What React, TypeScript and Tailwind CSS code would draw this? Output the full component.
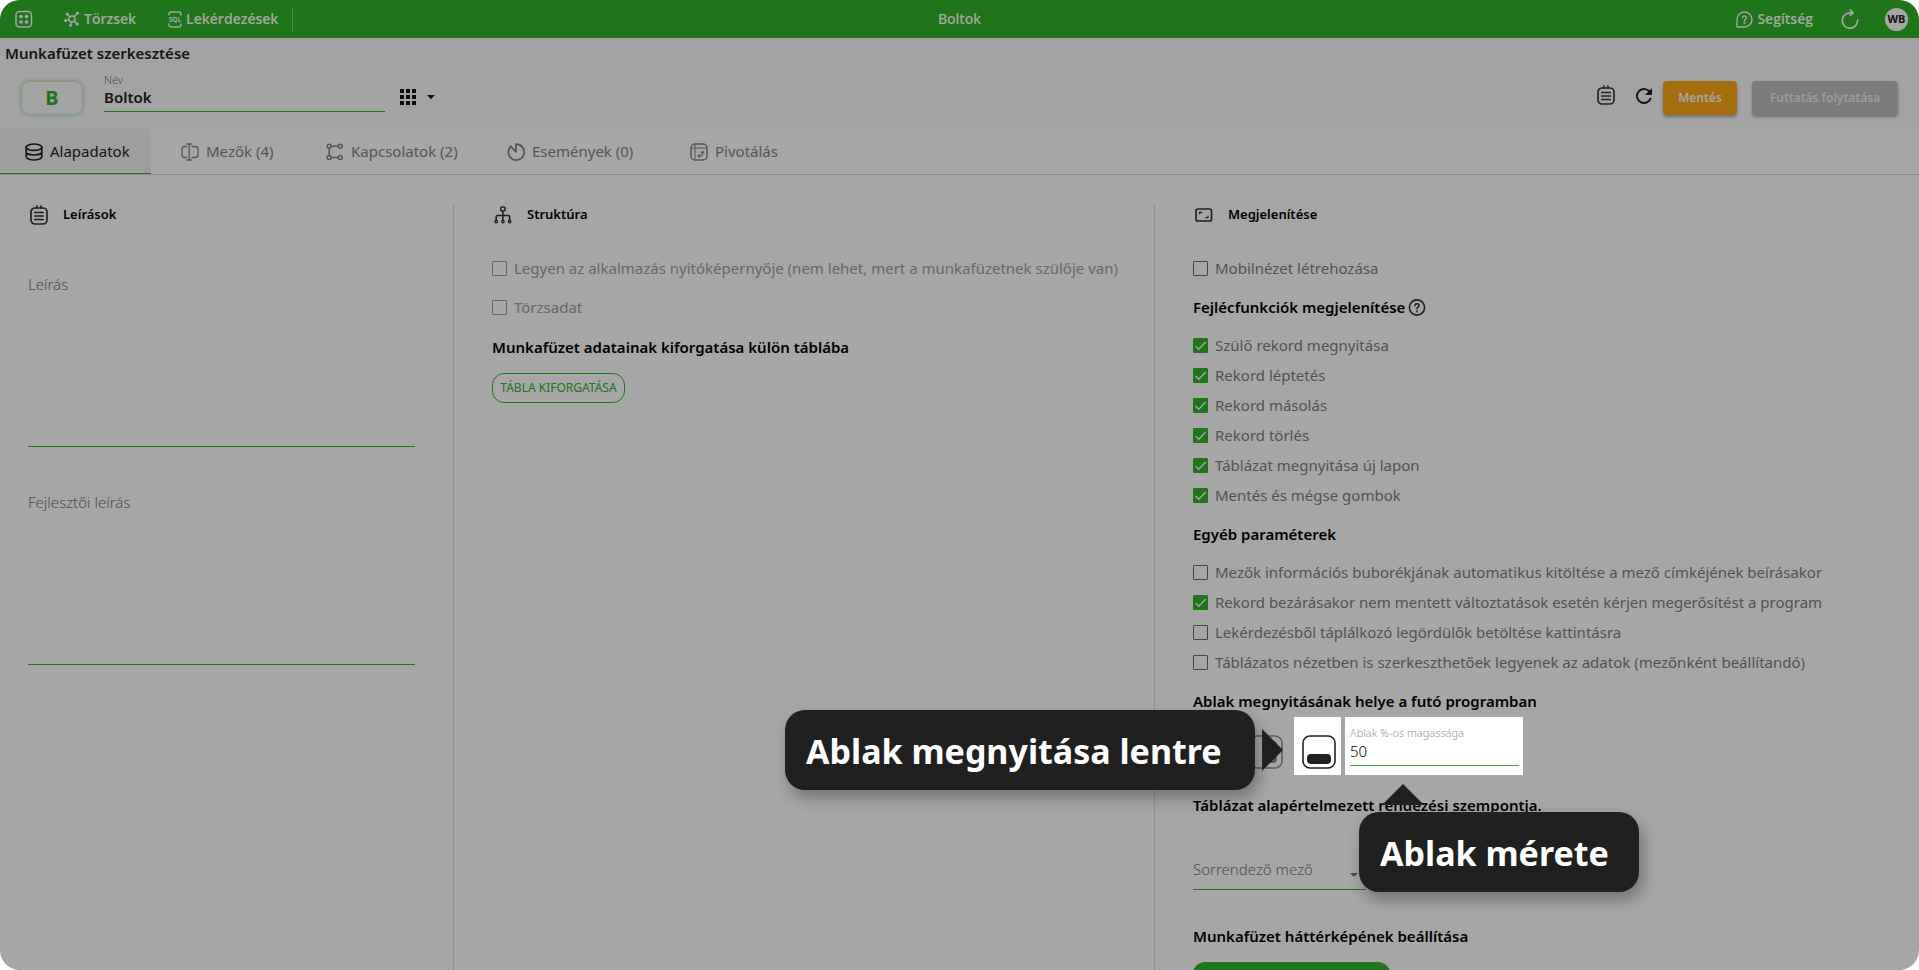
import type { ReactNode } from "react";

const strokeProps = {
  fill: "none",
  stroke: "currentColor",
  strokeLinecap: "round" as const,
  strokeLinejoin: "round" as const,
};

function AppsIcon() {
  return (
    <svg className="size-[18px]" viewBox="0 0 18 18" {...strokeProps} strokeWidth={1.5}>
      <rect x="1" y="1.5" width="15.5" height="15.5" rx="3.5" />
      <g fill="currentColor" stroke="none">
        <circle cx="6" cy="6.5" r="1.8" />
        <circle cx="11.500" cy="6.500" r="1.800" />
        <circle cx="6" cy="12" r="1.8" />
        <circle cx="11.500" cy="12" r="1.800" />
      </g>
    </svg>
  );
}

function HubIcon() {
  return (
    <svg className="size-4" viewBox="0 0 16 16" {...strokeProps} strokeWidth={1.3}>
      <circle cx="8" cy="8" r="3" />
      <path d="M3.5 3.5l2.3 2.3M13 2.5l-2.8 3M5 8.8L1.8 9.6M10.2 10l2.6 2.8M7.3 11l-.7 3" />
      <g fill="currentColor" stroke="none">
        <circle cx="3.2" cy="3" r="1.5" />
        <circle cx="13.4" cy="2" r="1.6" />
        <circle cx="1.6" cy="9.6" r="1.5" />
        <circle cx="13.3" cy="13" r="1.6" />
        <circle cx="6.5" cy="14.5" r="1.4" />
      </g>
    </svg>
  );
}

function SqlIcon() {
  return (
    <svg className="h-[17px] w-[14px]" viewBox="0 0 14 17" {...strokeProps} strokeWidth={1.4}>
      <path d="M1 4V3.2Q1 1 3.2 1h7.6Q13 1 13 3.2V4M1 13v.8Q1 16 3.2 16h7.6q2.2 0 2.2-2.2V13" />
      <text x="7" y="11" textAnchor="middle" fontSize="6.5" fontWeight="700" fill="currentColor" stroke="none">
        SQL
      </text>
    </svg>
  );
}

function HelpBubbleIcon() {
  return (
    <svg className="size-[17px]" viewBox="0 0 17 17" {...strokeProps} strokeWidth={1.4}>
      <path d="M1 16V8.5A7.5 7.5 0 1 1 8.5 16z" />
      <path d="M6.6 6.8q0-1.9 1.9-1.9t1.9 1.8c0 1.5-1.9 1.5-1.9 3" />
      <circle cx="8.5" cy="12" r=".4" />
    </svg>
  );
}

function ReloadIcon() {
  return (
    <svg className="h-5 w-[18px]" viewBox="0 0 18 20" {...strokeProps} strokeWidth={1.7}>
      <path d="M16.600 11a7.700 7.700 0 1 1-7.600-7.200h2.500" />
      <path d="M9.300 1l2.700 2.800-2.700 2.600" />
    </svg>
  );
}

function RefreshIcon() {
  return (
    <svg className="size-4" viewBox="0 0 16 16" fill="currentColor">
      <path d="M13.65 2.35A8 8 0 1 0 15.73 10h-2.08A6 6 0 1 1 8 2c1.66 0 3.14.69 4.22 1.78L9 7h7V0z" />
    </svg>
  );
}

function NotesIcon() {
  return (
    <svg className="h-5 w-[18px]" viewBox="0 0 18 20" {...strokeProps} strokeWidth={1.7}>
      <rect x="1" y="3" width="16" height="16" rx="4" />
      <path d="M4.800 7.500h8.400M4.800 11h8.400M4.800 14.500h8.400M7 1v2M11 1v2" />
    </svg>
  );
}

function DatabaseIcon() {
  return (
    <svg className="size-[18px]" viewBox="0 0 18 18" {...strokeProps} strokeWidth={1.7}>
      <ellipse cx="9" cy="4.2" rx="7.8" ry="3.2" />
      <path d="M1.2 4.2v9.6c0 1.8 3.5 3.2 7.8 3.2s7.800-1.400 7.800-3.200V4.200M1.200 9c0 1.700 3.500 3 7.800 3s7.800-1.300 7.800-3" />
    </svg>
  );
}

function FieldsIcon() {
  return (
    <svg className="size-[18px]" viewBox="0 0 18 18" {...strokeProps} strokeWidth={1.3}>
      <path d="M5.5 3.5H3.8Q1 3.5 1 6.3v5.4q0 2.8 2.8 2.8h1.7M11 3.5h3.2Q17 3.5 17 6.3v5.4q0 2.8-2.8 2.8H11" />
      <path d="M8.2 1v16M5.8 1h4.8M5.8 17h4.8" />
    </svg>
  );
}

function LinksIcon() {
  return (
    <svg className="size-[18px]" viewBox="0 0 18 18" {...strokeProps} strokeWidth={1.5}>
      <circle cx="3.2" cy="3.2" r="2" />
      <circle cx="14.2" cy="3.2" r="2" />
      <circle cx="3.2" cy="14.6" r="2" />
      <circle cx="14.2" cy="14.6" r="2" />
      <path d="M5.4 3.2H12M5.4 14.6H12M3.2 5.4v7" />
    </svg>
  );
}

function EventsIcon() {
  return (
    <svg className="size-[18px]" viewBox="0 0 18 18" {...strokeProps} strokeWidth={1.7}>
      <path d="M9 9V1.200a7.900 7.900 0 1 1-5.200 2.200L9 9" />
    </svg>
  );
}

function PivotIcon() {
  return (
    <svg className="size-[18px]" viewBox="0 0 18 18" {...strokeProps} strokeWidth={1.5}>
      <rect x="1" y="1" width="16" height="16" rx="4" />
      <path d="M1 5h16M5 1v16" strokeWidth={1} />
      <path d="M8.5 13h1.500q2.500 0 2.500-2.500V9M11.200 9.800l1.300-1.400 1.300 1.400M9.600 11.600L8.200 13l1.400 1.300" strokeWidth={1.1} />
    </svg>
  );
}

function TreeIcon() {
  return (
    <svg className="size-[18px]" viewBox="0 0 18 18" {...strokeProps} strokeWidth={1.6}>
      <rect x="6.8" y="1" width="4.2" height="4" rx="1" />
      <path d="M8.9 5v9M2.2 14v-3.500q0-1 1-1h11.400q1 0 1 1V14" />
      <g strokeWidth={1.4}>
        <circle cx="2.2" cy="15.5" r="1.2" />
        <circle cx="8.9" cy="15.5" r="1.2" />
        <circle cx="15.6" cy="15.5" r="1.2" />
      </g>
    </svg>
  );
}

function ScreenIcon() {
  return (
    <svg className="size-[18px]" viewBox="0 0 18 18" {...strokeProps} strokeWidth={1.7}>
      <rect x="1" y="3" width="15.5" height="12" rx="2" />
      <path d="M4.5 8.2V6.500h2.800M13 9.800v1.800h-2.800" strokeWidth={1.3} strokeLinecap="butt" />
    </svg>
  );
}

function HelpCircleIcon() {
  return (
    <svg className="size-[18px]" viewBox="0 0 18 18" {...strokeProps} strokeWidth={1.6}>
      <circle cx="9" cy="9.5" r="7.6" />
      <path d="M7 7.700q0-2 2-2t2 1.900c0 1.500-2 1.600-2 3.100" />
      <circle cx="9" cy="13.400" r=".3" />
    </svg>
  );
}

function GridIcon() {
  return (
    <svg className="size-4" viewBox="0 0 16 16" fill="currentColor">
      {[0, 6, 12].map((y) =>
        [0, 6, 12].map((x) => <rect key={`${x}-${y}`} x={x} y={y} width="4" height="4" />)
      )}
    </svg>
  );
}

function Caret() {
  return (
    <svg className="h-1 w-2" viewBox="0 0 8 4" fill="currentColor">
      <path d="M0 0h8L4 4z" />
    </svg>
  );
}

const tabs = [
  { label: "Alapadatok", icon: <DatabaseIcon />, width: "w-[151px]", active: true },
  { label: "Mezők (4)", icon: <FieldsIcon />, width: "w-[140px]" },
  { label: "Kapcsolatok (2)", icon: <LinksIcon />, width: "w-[176px]" },
  { label: "Események (0)", icon: <EventsIcon />, width: "w-[178px]" },
  { label: "Pivotálás", icon: <PivotIcon />, width: "w-[140px]" },
];

const headerFunctions = [
  "Szülő rekord megnyitása",
  "Rekord léptetés",
  "Rekord másolás",
  "Rekord törlés",
  "Táblázat megnyitása új lapon",
  "Mentés és mégse gombok",
];

const otherParams = [
  { label: "Mezők információs buborékjának automatikus kitöltése a mező címkéjének beírásakor" },
  { label: "Rekord bezárásakor nem mentett változtatások esetén kérjen megerősítést a program", checked: true },
  { label: "Lekérdezésből táplálkozó legördülők betöltése kattintásra" },
  { label: "Táblázatos nézetben is szerkeszthetőek legyenek az adatok (mezőnként beállítandó)" },
];

function Check({ label, checked, disabled }: { label: string; checked?: boolean; disabled?: boolean }) {
  return (
    <label className="flex h-[30px] items-center gap-[7px] whitespace-nowrap text-[15px] text-[#7f7f7f] has-disabled:text-[#a0a0a0]">
      <span className="relative flex size-[15px] shrink-0">
        <input
          type="checkbox"
          defaultChecked={checked}
          disabled={disabled}
          className="peer size-[15px] appearance-none rounded-[1px] border border-[#6b6b6b] checked:border-[#32b328] checked:bg-[#32b328] disabled:border-[#9a9a9a]"
        />
        <svg
          className="pointer-events-none absolute inset-0 hidden size-[15px] text-white peer-checked:block"
          viewBox="0 0 15 15"
          fill="none"
          stroke="currentColor"
          strokeWidth={1.5}
        >
          <path d="M2.5 8l3.3 3.2L12.7 4" />
        </svg>
      </span>
      {label}
    </label>
  );
}

function SectionTitle({ icon, children }: { icon: ReactNode; children: ReactNode }) {
  return (
    <div className="flex h-[22px] items-center gap-[15px] pl-[2px] text-[13px] font-semibold text-black">
      <span className="w-[18px] text-[#333]">{icon}</span>
      <h2>{children}</h2>
    </div>
  );
}

function Heading({ children }: { children: ReactNode }) {
  return <h3 className="flex h-6 items-center gap-[3px] whitespace-nowrap text-[15px] font-semibold text-black">{children}</h3>;
}

function DescriptionField({ label }: { label: string }) {
  return (
    <textarea
      aria-label={label}
      placeholder={label}
      className="mt-[44px] block h-[174px] w-full resize-none border-b border-[#2bb52b] text-[15px] font-light outline-none placeholder:text-[#757575]"
    />
  );
}

function PositionOption({ label, children, active }: { label: string; children: ReactNode; active?: boolean }) {
  return (
    <label className={active ? "block pt-[18px] pl-2" : "block pt-[18px] pl-2 opacity-50"}>
      <input type="radio" name="position" defaultChecked={active} aria-label={label} className="sr-only" />
      <svg className="size-[34px] text-[#222]" viewBox="0 0 34 34" fill="none" stroke="currentColor" strokeWidth={1.6}>
        <rect x="1" y="1" width="32" height="32" rx="7" />
        <g fill="currentColor" stroke="none">
          {children}
        </g>
      </svg>
    </label>
  );
}

export default function App() {
  return (
    <div className="relative isolate flex h-screen flex-col overflow-hidden rounded-[20px] bg-white font-['Noto_Sans',sans-serif] text-[#222]">
      {/* Top bar */}
      <header className="grid h-[38px] shrink-0 grid-cols-3 items-center bg-[#32b328] px-[15px] font-['Open_Sans',sans-serif] text-sm font-semibold text-white">
        <nav className="flex items-center">
          <button aria-label="Alkalmazások"><AppsIcon /></button>
          <a href="#" className="ml-[31px] flex items-center gap-1"><HubIcon />Törzsek</a>
          <a href="#" className="ml-8 flex items-center gap-1"><SqlIcon />Lekérdezések</a>
          <span className="ml-[14px] h-[23px] w-px bg-white/40"></span>
        </nav>
        <h1 className="text-center font-['Noto_Sans',sans-serif] font-medium">Boltok</h1>
        <div className="flex items-center justify-end">
          <a href="#" className="flex items-center gap-1"><HelpBubbleIcon />Segítség</a>
          <button aria-label="Újratöltés" className="ml-7"><ReloadIcon /></button>
          <button className="-mr-1 ml-[26px] size-[23px] rounded-full bg-white text-[11px] font-bold text-[#222]">WB</button>
        </div>
      </header>

      {/* Workbook header */}
      <section className="h-[91px] shrink-0 bg-[#fafafa]">
        <h2 className="flex h-[30px] items-center pl-[5px] text-[15px] font-semibold">Munkafüzet szerkesztése</h2>
        <div className="flex items-start pr-[21px] pl-[22px]">
          <button className="mt-[14px] h-8 w-[60px] rounded-lg text-xl leading-8 font-bold text-[#32b328] shadow-[0_0_4px_1px_#a5dca1]">B</button>
          <div className="ml-[22px] flex w-[281px] flex-col border-b border-[#2bb52b] pt-1 pb-1">
            <label htmlFor="name" className="text-[11px] leading-4 font-light text-[#777]">Név</label>
            <input id="name" defaultValue="Boltok" className="h-[19px] text-[15px] leading-[19px] font-semibold outline-none" />
          </div>
          <button aria-label="Ikon választása" className="mt-[21px] ml-[15px] flex items-center gap-[11px] text-[#111]">
            <GridIcon />
            <Caret />
          </button>
          <button aria-label="Leírás" className="mt-[17px] ml-auto text-[#333]"><NotesIcon /></button>
          <button aria-label="Frissítés" className="mt-5 ml-[21px] text-[#222]"><RefreshIcon /></button>
          <button className="mt-[13px] ml-[11px] h-[34px] w-[74px] rounded-sm bg-[#fca816] text-xs font-semibold text-white shadow-[0_2px_3px_rgba(0,0,0,0.3)]">
            Mentés
          </button>
          <button className="mt-[13px] ml-[15px] h-[34px] w-[146px] rounded-sm bg-[#bfc1be] text-xs font-semibold text-[#eee] shadow-[0_2px_3px_rgba(0,0,0,0.3)]">
            Futtatás folytatása
          </button>
        </div>
      </section>

      {/* Tabs */}
      <nav className="flex h-[46px] shrink-0 gap-[5px] border-b border-[#d6d6d6]">
        {tabs.map((tab) => (
          <button
            key={tab.label}
            className={`flex items-center gap-[7px] pl-[25px] text-[15px] whitespace-nowrap ${tab.width} ${
              tab.active ? "bg-[#f3f3f3] text-[#222] shadow-[inset_0_-1px_#2bb52b]" : "text-[#858585]"
            }`}
          >
            {tab.icon}
            {tab.label}
          </button>
        ))}
      </nav>

      <main className="mt-[29px] grid flex-1 grid-cols-[454fr_701fr_764fr]">
        {/* Descriptions */}
        <section className="border-r border-[#dcdcdc] pr-[38px] pl-7">
          <SectionTitle icon={<NotesIcon />}>Leírások</SectionTitle>
          <div className="pt-[3px]">
            <DescriptionField label="Leírás" />
            <DescriptionField label="Fejlesztői leírás" />
          </div>
        </section>

        {/* Structure */}
        <section className="border-r border-[#dcdcdc] pl-[38px]">
          <SectionTitle icon={<TreeIcon />}>Struktúra</SectionTitle>
          <div className="mt-[27px] mb-[13px] flex flex-col gap-[9px]">
            <Check label="Legyen az alkalmazás nyitóképernyője (nem lehet, mert a munkafüzetnek szülője van)" disabled />
            <Check label="Törzsadat" disabled />
          </div>
          <Heading>Munkafüzet adatainak kiforgatása külön táblába</Heading>
          <button className="mt-[14px] h-[30px] w-[133px] rounded-xl border border-[#2bb52b] text-xs text-[#2bb52b]">
            TÁBLA KIFORGATÁSA
          </button>
        </section>

        {/* Appearance */}
        <section className="pl-[38px]">
          <SectionTitle icon={<ScreenIcon />}>Megjelenítése</SectionTitle>
          <div className="mt-[27px] mb-3">
            <Check label="Mobilnézet létrehozása" />
          </div>
          <Heading>
            Fejlécfunkciók megjelenítése
            <span className="text-[#333]"><HelpCircleIcon /></span>
          </Heading>
          <div className="mt-[11px] mb-3">
            {headerFunctions.map((label) => (
              <Check key={label} label={label} checked />
            ))}
          </div>
          <Heading>Egyéb paraméterek</Heading>
          <div className="mt-[11px] mb-3">
            {otherParams.map((param) => (
              <Check key={param.label} label={param.label} checked={param.checked} />
            ))}
          </div>
          <Heading>Ablak megnyitásának helye a futó programban</Heading>
          <div className="mt-1 mb-[18px] -ml-[5px] flex h-[58px] gap-1">
            <div className="flex gap-[6px]">
              <div className="w-[47px]">
                <PositionOption label="Középen">
                  <rect x="8" y="8" width="18" height="18" rx="4" />
                </PositionOption>
              </div>
              <div className="w-[47px]">
                <PositionOption label="Jobb oldalt">
                  <rect x="19" y="6" width="9" height="22" rx="4" />
                </PositionOption>
              </div>
              <div className="relative z-20 w-[47px] bg-white">
                <PositionOption label="Lent" active>
                  <rect x="5" y="19" width="24" height="10" rx="4" />
                </PositionOption>
                <div className="absolute top-3 right-full mr-[11px] flex h-[42px] items-center">
                  <span className="mr-[7px] flex h-20 w-[470px] shrink-0 items-center rounded-[20px] bg-[#202020] pt-[2px] pl-[21px] text-[34px] font-bold whitespace-nowrap text-white shadow-[4px_8px_16px_rgba(0,0,0,0.3)]">
                    Ablak megnyitása lentre
                  </span>
                  <svg className="h-[42px] w-[21px] shrink-0 text-[#202020]" viewBox="0 0 21 42" fill="currentColor">
                    <path d="M0 0l21 21L0 42z" />
                  </svg>
                </div>
              </div>
            </div>
            <div className="relative z-20 flex w-[178px] flex-col bg-white pt-2 pr-1 pl-[5px]">
              <label htmlFor="height" className="text-[11px] leading-4 font-light text-[#999]">Ablak %-os magassága</label>
              <input id="height" defaultValue="50" className="h-[25px] w-full border-b border-[#2bb52b] pb-1 text-[15px] font-light text-black outline-none" />
              <div className="absolute top-[67px] left-[14px] flex flex-col text-[#202020]">
                <svg className="mb-[7px] ml-[23px] h-[21px] w-[42px]" viewBox="0 0 42 21" fill="currentColor">
                  <path d="M21 0l21 21H0z" />
                </svg>
                <span className="flex h-20 w-[280px] items-center rounded-[20px] bg-[#202020] pt-[2px] pl-[21px] text-[34px] font-bold whitespace-nowrap text-white shadow-[4px_8px_16px_rgba(0,0,0,0.3)]">
                  Ablak mérete
                </span>
              </div>
            </div>
          </div>
          <Heading>Táblázat alapértelmezett rendezési szempontja.</Heading>
          <div className="mt-[35px] mb-[34px] flex w-[173px] items-center border-b border-[#2bb52b] pr-2 text-[#757575]">
            <select aria-label="Sorrendező mező" className="h-[37px] flex-1 appearance-none pb-[2px] text-[15px] font-light outline-none">
              <option>Sorrendező mező</option>
            </select>
            <span className="pt-2"><Caret /></span>
          </div>
          <Heading>Munkafüzet háttérképének beállítása</Heading>
          <button className="mt-[14px] h-[30px] w-[197px] rounded-xl bg-[#32b328]" aria-label="Háttérkép feltöltése"></button>
        </section>
      </main>

      <div className="pointer-events-none absolute inset-0 z-10 bg-black/35"></div>
    </div>
  );
}
